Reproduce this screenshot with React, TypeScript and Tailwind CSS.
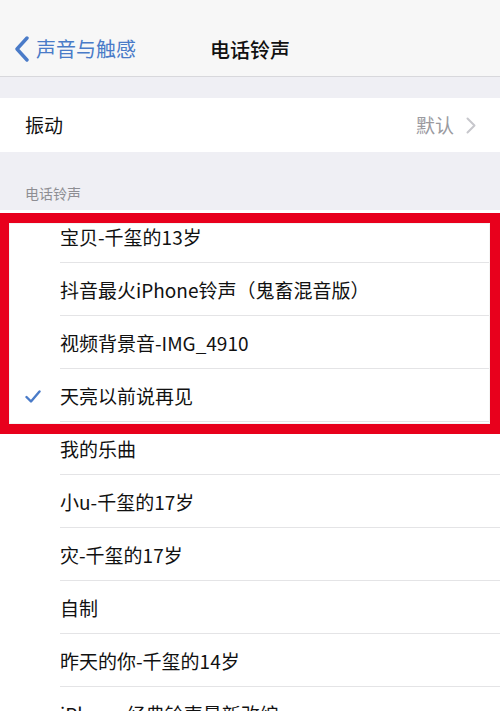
const RINGTONES = [
  { label: "宝贝-千玺的13岁" },
  { label: "抖音最火iPhone铃声（鬼畜混音版）" },
  { label: "视频背景音-IMG_4910" },
  { label: "天亮以前说再见", checked: true },
  { label: "我的乐曲" },
  { label: "小u-千玺的17岁" },
  { label: "灾-千玺的17岁" },
  { label: "自制" },
  { label: "昨天的你-千玺的14岁" },
  { label: "iPhone 经典铃声最新改编" },
];

const FONT = { fontFamily: '"Noto Sans CJK SC", "Noto Sans", sans-serif' };

function Check() {
  return (
    <svg width="16" height="13" viewBox="0 0 16 13" fill="none">
      <path
        d="M1.5 7l4.5 4.5L14.5 1.5"
        stroke="#4a7bc8"
        strokeWidth="2.4"
        strokeLinecap="round"
        strokeLinejoin="round"
      />
    </svg>
  );
}

export default function App() {
  return (
    <div
      className="w-[500px] h-[711px] overflow-hidden bg-[#efeff4] text-[#111]"
      style={FONT}
    >
      {/* Nav bar */}
      <div className="h-[77px] bg-[#f7f7f7] border-b border-[#d8d8dc] relative flex items-end pb-[14px]">
        <div className="flex items-center pl-[14px] text-[#4a7bc8] text-[20px] leading-none">
          <svg width="16" height="26" viewBox="0 0 16 26" fill="none" className="mr-[6px]">
            <path
              d="M13 2L3 13l10 11"
              stroke="#4a7bc8"
              strokeWidth="3.4"
              strokeLinecap="round"
              strokeLinejoin="round"
            />
          </svg>
          <span>声音与触感</span>
        </div>
        <div className="absolute left-0 right-0 bottom-[16px] text-center text-[20px] font-medium leading-none">
          电话铃声
        </div>
      </div>

      <div className="h-[21px]" />

      {/* Vibration row */}
      <div className="h-[54px] bg-white flex items-center pl-[25px] pr-[24px]">
        <span className="text-[19px] flex-1">振动</span>
        <span className="text-[19px] text-[#9a9a9f]">默认</span>
        <svg width="10" height="17" viewBox="0 0 10 17" fill="none" className="ml-[12px]">
          <path
            d="M1.5 1.5l7 7-7 7"
            stroke="#c7c7cc"
            strokeWidth="2"
            strokeLinecap="round"
            strokeLinejoin="round"
          />
        </svg>
      </div>

      {/* Section header */}
      <div className="h-[58px] flex items-end pl-[25px] pb-[6px] text-[14px] text-[#8e8e93]">
        电话铃声
      </div>

      {/* Ringtone list */}
      <div className="relative bg-white">
        {RINGTONES.map((r) => (
          <div key={r.label} className="h-[53px] flex items-stretch">
            <div className="w-[60px] flex items-center pl-[25px] pt-[2px]">
              {r.checked && <Check />}
            </div>
            <div className="flex-1 flex items-center pt-[3px] border-b border-[#e4e4e6] text-[19px]">
              {r.label}
            </div>
          </div>
        ))}

        {/* Red highlight frame */}
        <div className="absolute left-0 right-0 top-[3px] h-[221px] border-[10px] border-l-[9px] border-[#e8001c]">
          <div className="w-full h-full border border-[#f4f4f4]" />
        </div>
      </div>
    </div>
  );
}
